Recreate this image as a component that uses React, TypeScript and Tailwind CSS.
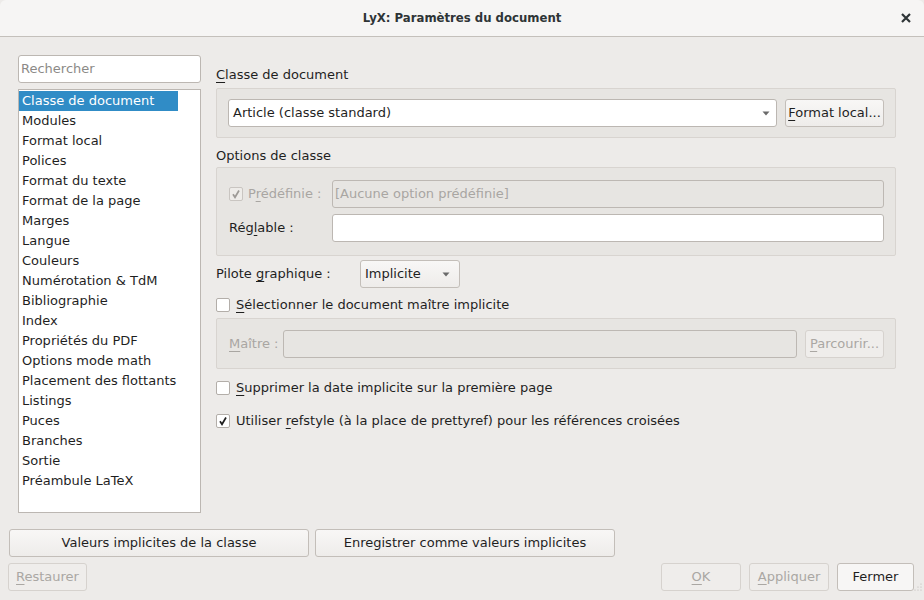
import React from "react";

const items = [
  "Classe de document",
  "Modules",
  "Format local",
  "Polices",
  "Format du texte",
  "Format de la page",
  "Marges",
  "Langue",
  "Couleurs",
  "Numérotation & TdM",
  "Bibliographie",
  "Index",
  "Propriétés du PDF",
  "Options mode math",
  "Placement des flottants",
  "Listings",
  "Puces",
  "Branches",
  "Sortie",
  "Préambule LaTeX",
];

function U({ children }: { children: React.ReactNode }) {
  return <span className="underline underline-offset-[3px] decoration-1">{children}</span>;
}

function Button({
  children,
  className = "",
  disabled = false,
}: {
  children: React.ReactNode;
  className?: string;
  disabled?: boolean;
}) {
  return (
    <div
      className={`h-[28px] shrink-0 whitespace-nowrap flex items-center justify-center rounded-[3px] border ${
        disabled
          ? "border-[#d6d2ce] text-[#aaa7a3] bg-[#efedeb]"
          : "border-[#c3beb9] bg-gradient-to-b from-[#f8f7f6] to-[#eeecea] text-[#1f1f1f]"
      } ${className}`}
    >
      {children}
    </div>
  );
}

function Arrow() {
  return (
    <svg width="8" height="5" viewBox="0 0 8 5">
      <path d="M0.5 0.5 H7.5 L4 4.5 Z" fill="#6a6a6a" />
    </svg>
  );
}

function Checkbox({ checked = false, disabled = false }: { checked?: boolean; disabled?: boolean }) {
  return (
    <div
      className={`w-[14px] h-[14px] shrink-0 rounded-[2px] border flex items-center justify-center ${
        disabled ? "border-[#c9c5c1] bg-[#eeece9]" : "border-[#b3aea9] bg-white"
      }`}
    >
      {checked && (
        <svg width="10" height="10" viewBox="0 0 10 10">
          <path
            d="M2 5.2 L4 8.3 L8 1.5"
            fill="none"
            stroke={disabled ? "#9d9a96" : "#1f1f1f"}
            strokeWidth="1.7"
          />
        </svg>
      )}
    </div>
  );
}

export default function App() {
  return (
    <div
      className="w-[924px] h-[600px] bg-[#edebe9] flex flex-col text-[13px] text-[#1f1f1f] overflow-hidden"
      style={{ fontFamily: '"DejaVu Sans", sans-serif' }}
    >
      {/* Title bar */}
      <div className="h-[37px] shrink-0 bg-[#f6f5f4] border-b border-[#c4c0bb] rounded-t-[6px] flex items-center relative">
        <div
          className="flex-1 text-center font-bold text-[13px] text-[#2e3436]"
          style={{ fontFamily: '"DejaVu Sans Condensed", "DejaVu Sans", sans-serif' }}
        >
          LyX: Paramètres du document
        </div>
        <div className="absolute right-[13px] top-[13px]">
          <svg width="10" height="10" viewBox="0 0 10 10">
            <path d="M1 1 L9 9 M9 1 L1 9" stroke="#2e3436" strokeWidth="2.2" />
          </svg>
        </div>
      </div>

      {/* Main */}
      <div className="h-[476px] shrink-0 flex">
        {/* Left */}
        <div className="ml-[18px] w-[183px] flex flex-col">
          <div className="mt-[18px] h-[28px] bg-white border border-[#bcb7b2] rounded-[3px] flex items-center pl-[2px] text-[#8c8a87]">
            Rechercher
          </div>
          <div className="mt-[6px] h-[425px] bg-white border border-[#bcb7b2] pt-[1px]">
            {items.map((it, i) => (
              <div
                key={it}
                className={`h-[20px] leading-[20px] pl-[3px] whitespace-nowrap ${
                  i === 0 ? "bg-[#308cc6] text-white w-[159px]" : ""
                }`}
              >
                {it}
              </div>
            ))}
          </div>
        </div>

        {/* Right */}
        <div className="ml-[15px] w-[680px] flex flex-col">
          <div className="mt-[29px] h-[18px] leading-[18px]">
            <U>C</U>lasse de document
          </div>
          <div className="mt-[4px] bg-[#e7e5e2] border border-[#d8d4d0] rounded-[2px] px-[11px] py-[10px] flex gap-[8px]">
            <div className="flex-1 h-[28px] bg-white border border-[#bcb7b2] rounded-[3px] flex items-center pl-[4px] pr-[6px]">
              <span className="flex-1">Article (classe standard)</span>
              <Arrow />
            </div>
            <Button className="w-[99px]">
              <span>
                <U>F</U>ormat local...
              </span>
            </Button>
          </div>

          <div className="mt-[9px] h-[18px] leading-[18px]">Options de classe</div>
          <div className="mt-[2px] bg-[#e7e5e2] border border-[#d8d4d0] rounded-[2px] pl-[12px] pr-[11px] pt-[12px] pb-[13px] flex flex-col gap-[6px]">
            <div className="flex items-center h-[28px]">
              <div className="w-[103px] shrink-0 whitespace-nowrap flex items-center gap-[5px] text-[#a9a6a2]">
                <Checkbox checked disabled />
                <span>
                  P<U>r</U>édéfinie :
                </span>
              </div>
              <div className="flex-1 h-[28px] border border-[#bdb8b3] rounded-[3px] flex items-center pl-[2px] text-[#a9a6a2]">
                [Aucune option prédéfinie]
              </div>
            </div>
            <div className="flex items-center h-[28px]">
              <div className="w-[103px] shrink-0 whitespace-nowrap">
                Rég<U>l</U>able :
              </div>
              <div className="flex-1 h-[28px] bg-white border border-[#bcb7b2] rounded-[3px]" />
            </div>
          </div>

          <div className="mt-[4px] h-[28px] flex items-center">
            <div className="w-[144px] shrink-0 whitespace-nowrap">
              Pilote <U>g</U>raphique :
            </div>
            <div className="w-[100px] h-[28px] border border-[#c3beb9] rounded-[3px] bg-gradient-to-b from-[#f8f7f6] to-[#eeecea] flex items-center pl-[4px] pr-[9px]">
              <span className="flex-1">Implicite</span>
              <Arrow />
            </div>
          </div>

          <div className="mt-[8px] h-[18px] flex items-center gap-[6px]">
            <Checkbox />
            <span>
              <U>S</U>électionner le document maître implicite
            </span>
          </div>
          <div className="mt-[4px] h-[51px] bg-[#e7e5e2] border border-[#d8d4d0] rounded-[2px] pl-[12px] pr-[11px] flex items-center">
            <div className="w-[54px] shrink-0 whitespace-nowrap text-[#a9a6a2]">
              <U>M</U>aître :
            </div>
            <div className="flex-1 h-[28px] border border-[#bdb8b3] rounded-[3px] mr-[8px]" />
            <Button disabled className="w-[79px]">
              <span>
                <U>P</U>arcourir...
              </span>
            </Button>
          </div>

          <div className="mt-[10px] h-[18px] flex items-center gap-[6px]">
            <Checkbox />
            <span>
              <U>S</U>upprimer la date implicite sur la première page
            </span>
          </div>
          <div className="mt-[15px] h-[18px] flex items-center gap-[6px]">
            <Checkbox checked />
            <span>
              Utiliser <U>r</U>efstyle (à la place de prettyref) pour les références croisées
            </span>
          </div>
        </div>
      </div>

      {/* Bottom buttons */}
      <div className="mt-[16px] ml-[9px] flex gap-[6px]">
        <Button className="w-[300px]">Valeurs implicites de la classe</Button>
        <Button className="w-[300px]">Enregistrer comme valeurs implicites</Button>
      </div>
      <div className="mt-[6px] ml-[8px] mr-[10px] flex items-center">
        <Button disabled className="w-[79px]">
          <span>
            <U>R</U>estaurer
          </span>
        </Button>
        <div className="flex-1" />
        <div className="flex gap-[8px]">
          <Button disabled className="w-[80px]">
            <span>
              <U>O</U>K
            </span>
          </Button>
          <Button disabled className="w-[80px]">
            <span>
              <U>A</U>ppliquer
            </span>
          </Button>
          <Button className="w-[77px] !bg-none !bg-[#f7f6f5]">Fermer</Button>
        </div>
      </div>
      <div className="flex justify-end pr-[2px] -mt-[8px]">
        <svg width="8" height="8" viewBox="0 0 8 8">
          <circle cx="7" cy="1" r="0.6" fill="#b8b4b0" />
          <circle cx="4" cy="4" r="0.6" fill="#b8b4b0" />
          <circle cx="7" cy="4" r="0.6" fill="#b8b4b0" />
          <circle cx="1" cy="7" r="0.6" fill="#b8b4b0" />
          <circle cx="4" cy="7" r="0.6" fill="#b8b4b0" />
          <circle cx="7" cy="7" r="0.6" fill="#b8b4b0" />
        </svg>
      </div>
    </div>
  );
}
